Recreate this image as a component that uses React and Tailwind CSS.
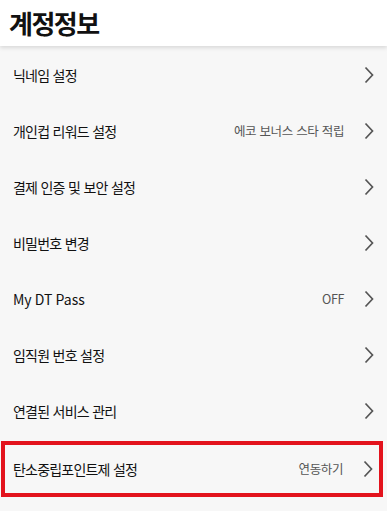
import React from "react";

const rows = [
  { label: "닉네임 설정", value: "" },
  { label: "개인컵 리워드 설정", value: "에코 보너스 스타 적립" },
  { label: "결제 인증 및 보안 설정", value: "" },
  { label: "비밀번호 변경", value: "" },
  { label: "My DT Pass", value: "OFF", latin: true },
  { label: "임직원 번호 설정", value: "" },
  { label: "연결된 서비스 관리", value: "" },
  { label: "탄소중립포인트제 설정", value: "연동하기", highlight: true },
];

function Chevron() {
  return (
    <svg width="10" height="18" viewBox="0 0 10 18" className="shrink-0">
      <path d="M1.5 1.5 L8.5 9 L1.5 16.5" fill="none" stroke="#555555" strokeWidth="1.7" />
    </svg>
  );
}

export default function App() {
  return (
    <div
      className="w-[387px] h-[511px] bg-[#f7f7f7] overflow-hidden"
      style={{ fontFamily: '"Noto Sans CJK KR", "Noto Sans", sans-serif' }}
    >
      <div className="relative z-10 h-[46px] bg-white flex items-center pl-[9px] shadow-[0_2px_4px_rgba(0,0,0,0.12)]">
        <h1 className="text-[26px] font-bold text-[#111] tracking-[-1.5px] leading-none">계정정보</h1>
      </div>
      <div className="flex flex-col pt-[1px]">
        {rows.map((r) => (
          <div
            key={r.label}
            className={
              r.highlight
                ? "h-[56px] ml-[1px] w-[382px] border-[4px] border-[#e3131d] flex items-center pl-[8px] pr-[6px] mt-[2px]"
                : "h-[56px] flex items-center pl-[13px] pr-[13px]"
            }
          >
            <span
              className={
                r.latin
                  ? "text-[14px] text-[#111] tracking-[0px] flex-1"
                  : "text-[14px] text-[#111] tracking-[-0.8px] [word-spacing:1px] flex-1"
              }
            >
              {r.label}
            </span>
            {r.value && (
              <span className="text-[12.5px] text-[#555] tracking-[-0.4px] [word-spacing:1px] mr-[20px]">{r.value}</span>
            )}
            <Chevron />
          </div>
        ))}
      </div>
    </div>
  );
}
